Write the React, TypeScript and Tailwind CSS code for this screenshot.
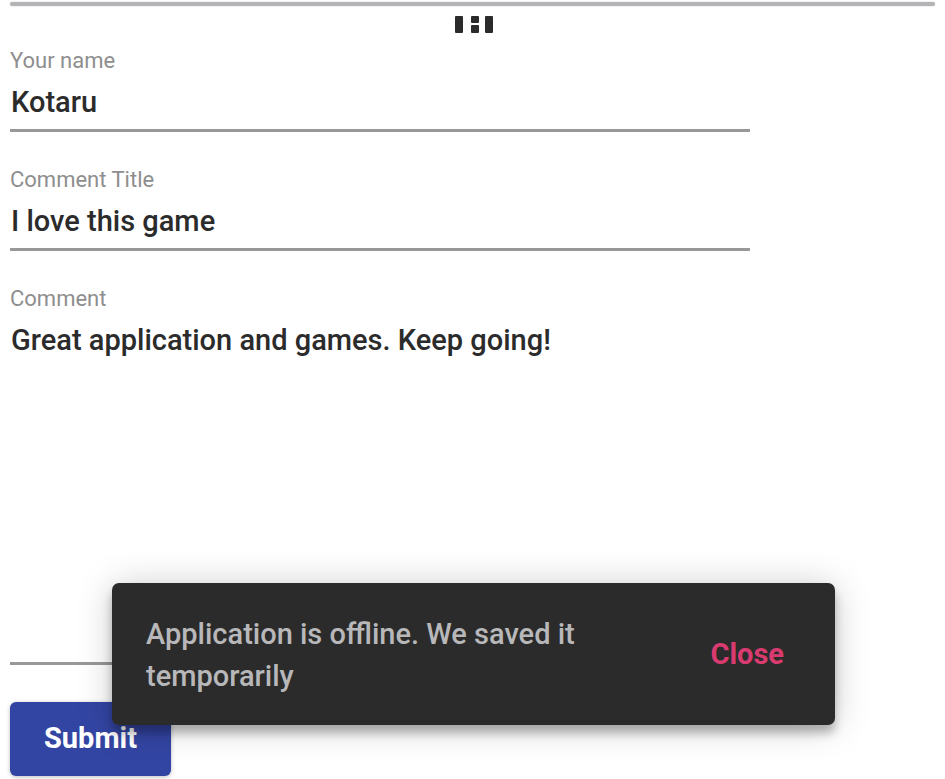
import { useState } from "react";

const labelClass = "block text-[22px] leading-[30px] text-[#8e8e8e]";
const fieldClass =
  "block w-full rounded-none border-0 border-b-[3px] border-[#98989a] bg-transparent px-px text-[29px] font-medium text-[#2b2b2b] outline-none";

function DragHandle() {
  return (
    <svg width="40" height="20" viewBox="0 0 40 20" fill="#2b2b2b" aria-hidden="true">
      <rect x="2" y="1" width="8" height="17" rx="1" />
      <rect x="18" y="1" width="8" height="7" rx="1" />
      <rect x="18" y="10" width="8" height="8" rx="1" />
      <rect x="32" y="1" width="8" height="17" rx="1" />
    </svg>
  );
}

export default function App() {
  const [open, setOpen] = useState(true);

  return (
    <main className="relative min-h-screen overflow-hidden bg-white px-[10px] font-['Roboto','Liberation_Sans',sans-serif]">
      <div className="flex flex-col items-center gap-[9px] pt-[2px]">
        <div className="h-1 w-full rounded-full bg-[#b4b4b6] shadow-[0_0_2px_#cccccc]" />
        <DragHandle />
      </div>
      <form className="pt-[11px]" onSubmit={(e) => e.preventDefault()}>
        <div className="flex w-4/5 flex-col gap-[33px]">
          <div>
            <label htmlFor="name" className={labelClass}>Your name</label>
            <input id="name" type="text" defaultValue="Kotaru" className={`${fieldClass} h-[56px] pb-[2px]`} />
          </div>
          <div>
            <label htmlFor="title" className={labelClass}>Comment Title</label>
            <input id="title" type="text" defaultValue="I love this game" className={`${fieldClass} h-[56px] pb-[2px]`} />
          </div>
          <div>
            <label htmlFor="comment" className={labelClass}>Comment</label>
            <textarea
              id="comment"
              defaultValue="Great application and games. Keep going!"
              className={`${fieldClass} h-[351px] resize-none pt-[5px] leading-[42px]`}
            />
          </div>
        </div>
        <button
          type="submit"
          className="mt-[37px] h-[74px] rounded-md bg-[#3345a3] px-[34px] text-[29px] font-bold text-white shadow-[0_1px_4px_rgba(0,0,0,0.25)]"
        >
          Submit
        </button>
      </form>
      {open && (
        <div
          role="status"
          className="absolute bottom-[54px] left-[112px] right-[110px] flex items-center justify-between gap-8 rounded-[7px] bg-[#2b2b2b] pb-[28px] pl-[34px] pr-[51px] pt-[30px] shadow-[0_8px_10px_rgba(0,0,0,0.26),0_2px_36px_rgba(0,0,0,0.2)]"
        >
          <p className="max-w-[450px] text-[29px] font-medium leading-[42px] text-[#b8b8ba]">
            Application is offline. We saved it temporarily
          </p>
          <button type="button" onClick={() => setOpen(false)} className="text-[29px] font-bold text-[#d93b70]">
            Close
          </button>
        </div>
      )}
    </main>
  );
}
